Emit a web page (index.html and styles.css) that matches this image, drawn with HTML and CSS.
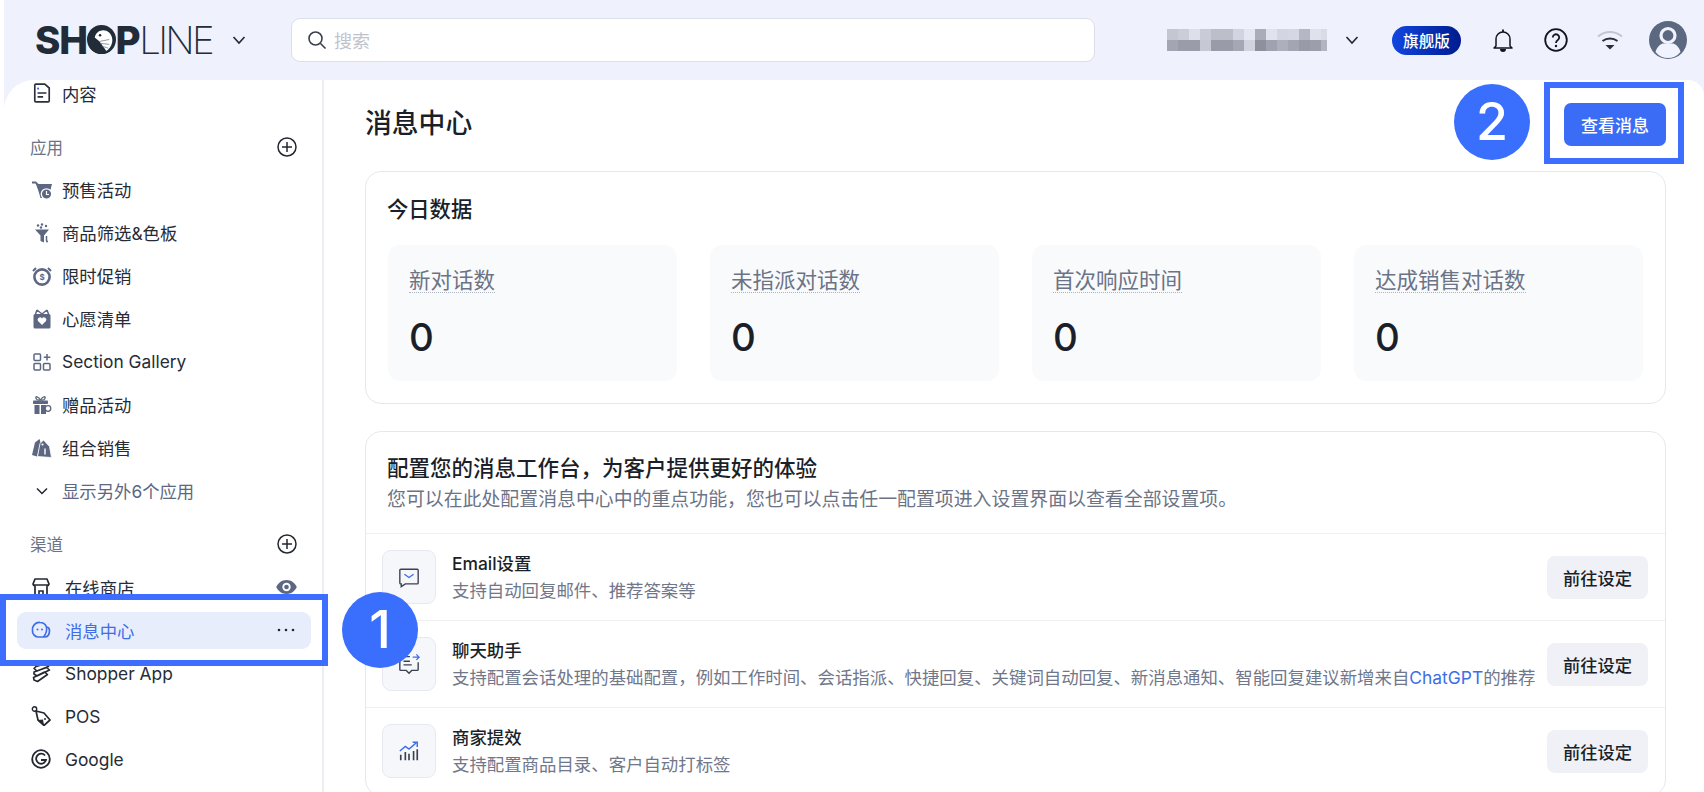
FILE: index.html
```html
<!DOCTYPE html>
<html lang="zh-CN">
<head>
<meta charset="utf-8">
<title>消息中心</title>
<link rel="stylesheet" href="styles.css">
</head>
<body>
<div class="shell">
  <header class="topbar">
    <div class="logo">
      <span class="logo-bold">SH</span><span class="logo-bold logo-o">O<svg class="logo-bird" viewBox="0 0 30 30"><circle cx="15" cy="15" r="15" fill="#222c38"/><path d="M8 13C9 7 15 4 20 6c5 2 7 8 6 12-1 4-3 7-6 9L13 17z" fill="#fff"/><circle cx="13.500" cy="10.500" r="1.300" fill="#222c38"/><path d="M13 17l10-2M14 19l9 1M16 22l6 2" stroke="#8d96a3" stroke-width="1" fill="none"/></svg></span><span class="logo-bold">P</span><span class="logo-light">LINE</span>
    </div>
    <svg class="chev logo-chev" viewBox="0 0 14 14"><path d="M1.500 4l5.500 6 5.500-6" /></svg>
    <div class="search">
      <svg class="search-icon" viewBox="0 0 20 20"><circle cx="8.500" cy="8.500" r="6.500"/><path d="M13.500 13.500L18.500 18.500"/></svg>
      <span class="search-text">搜索</span>
    </div>
    <svg class="mosaic" viewBox="0 0 160 22">
      <g>
        <rect x="0" width="11" height="11" fill="#c5c6d2"/><rect x="11" width="11" height="11" fill="#cbcdd9"/><rect x="22" width="11" height="11" fill="#dddfeb"/><rect x="33" width="11" height="11" fill="#cacbd8"/><rect x="44" width="11" height="11" fill="#bcbeca"/><rect x="55" width="11" height="11" fill="#bcbeca"/><rect x="66" width="11" height="11" fill="#d2d4e1"/><rect x="77" width="11" height="11" fill="#e4e6f2"/><rect x="88" width="11" height="11" fill="#abacb9"/><rect x="99" width="11" height="11" fill="#e0e2ee"/><rect x="110" width="11" height="11" fill="#d3d5e2"/><rect x="121" width="11" height="11" fill="#d5d7e4"/><rect x="132" width="11" height="11" fill="#b6b7c5"/><rect x="143" width="11" height="11" fill="#dfe1ed"/><rect x="154" width="6" height="11" fill="#d9dbe7"/>
      </g>
      <g>
        <rect x="0" y="11" width="11" height="11" fill="#a4a5b3"/><rect x="11" y="11" width="11" height="11" fill="#9b9caa"/><rect x="22" y="11" width="11" height="11" fill="#9b9caa"/><rect x="33" y="11" width="11" height="11" fill="#c6c8d4"/><rect x="44" y="11" width="11" height="11" fill="#9a9ba9"/><rect x="55" y="11" width="11" height="11" fill="#9a9ba9"/><rect x="66" y="11" width="11" height="11" fill="#a6a7b5"/><rect x="77" y="11" width="11" height="11" fill="#d1d3df"/><rect x="88" y="11" width="11" height="11" fill="#8f909e"/><rect x="99" y="11" width="11" height="11" fill="#a1a2b0"/><rect x="110" y="11" width="11" height="11" fill="#aeafbd"/><rect x="121" y="11" width="11" height="11" fill="#a4a5b3"/><rect x="132" y="11" width="11" height="11" fill="#989aa8"/><rect x="143" y="11" width="11" height="11" fill="#9d9eac"/><rect x="154" y="11" width="6" height="11" fill="#b3b4c2"/>
      </g>
    </svg>
    <svg class="chev store-chev" viewBox="0 0 14 14"><path d="M1.500 4l5.500 6 5.500-6" /></svg>
    <span class="plan">旗舰版</span>
    <svg class="bell" viewBox="0 0 20 23"><path d="M3 17V10a7 7 0 0 1 14 0v7l2 2H1z" fill="none" stroke="#12151c" stroke-width="1.500" stroke-linejoin="round"/><path d="M10 0.500v2.500" stroke="#12151c" stroke-width="1.800"/><path d="M7 20h6a3 3 0 0 1-6 0z" fill="#12151c"/></svg>
    <svg class="help" viewBox="0 0 24 24"><circle cx="12" cy="12" r="10.800" fill="none" stroke="#12151c" stroke-width="1.800"/><path d="M8.800 9.500a3.200 3.200 0 1 1 5 2.600c-1.200.8-1.800 1.400-1.800 2.900" fill="none" stroke="#12151c" stroke-width="1.800"/><circle cx="12" cy="18" r="1.200" fill="#12151c"/></svg>
    <svg class="wifi" viewBox="0 0 26 20"><path d="M1 6.500C8 0.500 18 0.500 25 6.500" fill="none" stroke="#c3c6d0" stroke-width="2"/><path d="M5.500 11c4.500-3.500 10.500-3.500 15 0" fill="none" stroke="#2a2e38" stroke-width="2"/><path d="M8.500 15h9L13 19.500z" fill="#2a2e38"/></svg>
    <svg class="avatar" viewBox="0 0 38 38"><circle cx="19" cy="19" r="19" fill="#5c6880"/><circle cx="19" cy="14.500" r="7" fill="none" stroke="#f0f2fd" stroke-width="3.200"/><path d="M6.500 31c1.500-6 6-8.500 8-8.500h9c2 0 6.500 2.500 8 8.500a16 16 0 0 1-25 0z" fill="#f0f2fd"/></svg>
  </header>

  <div class="panel">
    <aside class="sidebar">
      <nav class="nav-group nav-first">
        <a class="nav-item">
          <svg class="ico" viewBox="0 0 18 18"><path d="M3.500 1h8l4 3.500V16a1 1 0 0 1-1 1h-11a1 1 0 0 1-1-1V2a1 1 0 0 1 1-1z" fill="none" stroke="#2a2f3a" stroke-width="1.500"/><circle cx="5.500" cy="5" r="1" fill="#3d6ee8"/><path d="M5 9h8M5 12.500h5" stroke="#2a2f3a" stroke-width="1.400"/></svg>
          <span>内容</span>
        </a>
      </nav>
      <nav class="nav-group">
        <div class="nav-label"><span>应用</span><svg class="plus" viewBox="0 0 20 20"><circle cx="10" cy="10" r="9" /><path d="M10 5v10M5 10h10"/></svg></div>
        <a class="nav-item">
          <svg class="ico" viewBox="0 0 20 20"><path d="M0 1.500h4L6.500 4H20l-2.500 9.500H8L3.500 3.500H0z" fill="#5d6781"/><path d="M5 6l3.500 12h2l1.500-4" fill="#5d6781"/><circle cx="14.500" cy="14" r="5.200" fill="#5d6781" stroke="#fff" stroke-width="1.300"/><path d="M14.500 11v3.500H17" fill="none" stroke="#fff" stroke-width="1.200"/></svg>
          <span>预售活动</span>
        </a>
        <a class="nav-item">
          <svg class="ico" viewBox="0 0 20 20"><circle cx="6" cy="2.500" r="1.200" fill="#5d6781"/><circle cx="10" cy="1.500" r="1.200" fill="#5d6781"/><circle cx="14" cy="3" r="1.200" fill="#5d6781"/><circle cx="9" cy="4.500" r="1.200" fill="#5d6781"/><path d="M3 6.500h14l-5 6v7l-3.500-1.500v-5.500z" fill="#5d6781"/><path d="M14.500 13v5" stroke="#5d6781" stroke-width="1.500"/><circle cx="15" cy="18.500" r="1" fill="#5d6781"/></svg>
          <span>商品筛选&amp;色板</span>
        </a>
        <a class="nav-item">
          <svg class="ico" viewBox="0 0 20 20"><circle cx="10" cy="11" r="7.600" fill="none" stroke="#5d6781" stroke-width="2.600"/><path d="M1 5l3-3M19 5l-3-3" stroke="#5d6781" stroke-width="2"/><text class="ico-dollar" x="10" y="14.200" text-anchor="middle">$</text></svg>
          <span>限时促销</span>
        </a>
        <a class="nav-item">
          <svg class="ico" viewBox="0 0 20 20"><path d="M3 5h14a1.500 1.500 0 0 1 1.500 1.500V18a1.500 1.500 0 0 1-1.500 1.500H3A1.500 1.500 0 0 1 1.500 18V6.500A1.500 1.500 0 0 1 3 5z" fill="#5d6781"/><path d="M10 5L5 1M10 5l5-4M5 1L3.500 5M15 1l1.500 4" stroke="#5d6781" stroke-width="1.500" fill="none"/><path d="M10 16l-4-4a2.300 2.300 0 0 1 4-2.500 2.300 2.300 0 0 1 4 2.500z" fill="#fff"/></svg>
          <span>心愿清单</span>
        </a>
        <a class="nav-item">
          <svg class="ico" viewBox="0 0 20 20"><rect x="2" y="2" width="6.500" height="6.500" rx="1" fill="none" stroke="#5d6781" stroke-width="1.500"/><rect x="2" y="11.500" width="6.500" height="6.500" rx="1" fill="none" stroke="#5d6781" stroke-width="1.500"/><rect x="11.500" y="11.500" width="6.500" height="6.500" rx="1" fill="none" stroke="#5d6781" stroke-width="1.500"/><path d="M15 2v6.500M11.800 5.300h6.500" stroke="#5d6781" stroke-width="1.500"/></svg>
          <span>Section Gallery</span>
        </a>
        <a class="nav-item">
          <svg class="ico" viewBox="0 0 20 20"><rect x="1" y="5.500" width="15" height="3.500" rx=".8" fill="#5d6781"/><rect x="2.500" y="10" width="5" height="9" fill="#5d6781"/><rect x="9" y="10" width="5" height="9" fill="#5d6781"/><path d="M8.500 5C6 1 3 1 4 3.500S8 5 8.500 5zM8.500 5c2.500-4 5.500-4 4.500-1.500S9 5 8.500 5z" fill="none" stroke="#5d6781" stroke-width="1.300"/><circle cx="16" cy="13.500" r="2.800" fill="#fff" stroke="#5d6781" stroke-width="1.300"/></svg>
          <span>赠品活动</span>
        </a>
        <a class="nav-item">
          <svg class="ico" viewBox="0 0 20 20"><path d="M7.500 1L3 4.500 0 17l5 1.500 3.500-14z" fill="#5d6781"/><path d="M11.500 2L8 5.500 5.500 18.500l14 1-2-11z" fill="#5d6781" stroke="#fff" stroke-width=".8"/><circle cx="10.500" cy="6.500" r="1.100" fill="#fff"/><path d="M13 10.500v6" stroke="#fff" stroke-width="1.400"/></svg>
          <span>组合销售</span>
        </a>
        <a class="nav-item nav-more">
          <svg class="ico more-chev" viewBox="0 0 14 14"><path d="M2 4.500l5 5 5-5" /></svg>
          <span>显示另外6个应用</span>
        </a>
      </nav>
      <nav class="nav-group">
        <div class="nav-label"><span>渠道</span><svg class="plus" viewBox="0 0 20 20"><circle cx="10" cy="10" r="9" /><path d="M10 5v10M5 10h10"/></svg></div>
        <a class="nav-item channel">
          <svg class="ico" viewBox="0 0 20 20"><path d="M4 2h12l2 5a2.500 2.500 0 0 1-2 2v9H4V9a2.500 2.500 0 0 1-2-2z" fill="none" stroke="#23272f" stroke-width="1.700" stroke-linejoin="round"/><path d="M2.500 8h15M8 18v-4h4v4" fill="none" stroke="#23272f" stroke-width="1.600"/></svg>
          <span class="grow">在线商店</span>
          <svg class="eye" viewBox="0 0 22 15"><path d="M11 0C6 0 2 3 0 7.500 2 12 6 15 11 15s9-3 11-7.500C20 3 16 0 11 0z" fill="#5d6781"/><circle cx="11" cy="7.500" r="4.500" fill="#fff"/><circle cx="11" cy="7.500" r="2.500" fill="#5d6781"/></svg>
        </a>
        <a class="nav-item channel active">
          <svg class="ico" viewBox="0 0 20 20"><path d="M9 2.500a7 7 0 0 1 6.500 4.500 3.500 3.500 0 0 1 3 3.500c0 4-2 6.500-5 6.500H7a6 6 0 0 1-5.500-6.500A7 7 0 0 1 9 2.500z" fill="none" stroke="#3d6ee8" stroke-width="1.700"/><path d="M15.500 7c.5 3-.5 7-3 10" fill="none" stroke="#3d6ee8" stroke-width="1.500"/><circle cx="6.500" cy="9.500" r="1" fill="#3d6ee8"/><circle cx="11" cy="9.500" r="1" fill="#3d6ee8"/></svg>
          <span class="grow">消息中心</span>
          <svg class="dots" viewBox="0 0 18 4"><circle cx="2" cy="2" r="1.300"/><circle cx="9" cy="2" r="1.300"/><circle cx="16" cy="2" r="1.300"/></svg>
        </a>
        <a class="nav-item channel">
          <svg class="ico" viewBox="0 0 20 20"><path d="M5 3.500l9-2.500 3.500 2.500L6 8 3 5.500zM3 9l12.500-4.500L18.500 7 6 13l-3-2zM2.500 14.500L13.500 9l3 2.500-10 7-3.500-1.500z" fill="none" stroke="#23272f" stroke-width="1.600" stroke-linejoin="round"/></svg>
          <span>Shopper App</span>
        </a>
        <a class="nav-item channel">
          <svg class="ico" viewBox="0 0 20 20"><path d="M5 5L13 7l6 7-6 5.500L7 14z" fill="none" stroke="#23272f" stroke-width="1.700" stroke-linejoin="round"/><circle cx="3.500" cy="3" r="2.200" fill="none" stroke="#23272f" stroke-width="1.400"/><path d="M7 14l6 5.500-1-6z" fill="#23272f"/><circle cx="14" cy="13" r="1" fill="#23272f"/></svg>
          <span>POS</span>
        </a>
        <a class="nav-item channel">
          <svg class="ico" viewBox="0 0 20 20"><circle cx="10" cy="10" r="8.800" fill="none" stroke="#23272f" stroke-width="1.800"/><path d="M14 6.500a5 5 0 1 0 1 4.500H10" fill="none" stroke="#23272f" stroke-width="1.800"/></svg>
          <span>Google</span>
        </a>
      </nav>
    </aside>

    <main class="main">
      <div class="page-head">
        <h1>消息中心</h1>
        <button class="btn-primary">查看消息</button>
      </div>

      <section class="card stats">
        <h2>今日数据</h2>
        <div class="stat-grid">
          <div class="stat"><span class="stat-label">新对话数</span><div class="stat-value">0</div></div>
          <div class="stat"><span class="stat-label">未指派对话数</span><div class="stat-value">0</div></div>
          <div class="stat"><span class="stat-label">首次响应时间</span><div class="stat-value">0</div></div>
          <div class="stat"><span class="stat-label">达成销售对话数</span><div class="stat-value">0</div></div>
        </div>
      </section>

      <section class="card config">
        <div class="config-head">
          <h2 class="config-title">配置您的消息工作台，为客户提供更好的体验</h2>
          <p>您可以在此处配置消息中心中的重点功能，您也可以点击任一配置项进入设置界面以查看全部设置项。</p>
        </div>
        <div class="row">
          <div class="row-icon"><svg viewBox="0 0 24 24"><path d="M3 3.500h18a1 1 0 0 1 1 1v14a1 1 0 0 1-1 1H8l-4.500 3V19.500H3a1 1 0 0 1-1-1v-14a1 1 0 0 1 1-1z" fill="none" stroke="#3a4150" stroke-width="1.500"/><path d="M7 9l5 3.500L17 9" fill="none" stroke="#3d6ee8" stroke-width="1.500"/></svg></div>
          <div class="row-text"><div class="row-title">Email设置</div><div class="row-sub">支持自动回复邮件、推荐答案等</div></div>
          <button class="btn-soft">前往设定</button>
        </div>
        <div class="row">
          <div class="row-icon"><svg viewBox="0 0 24 24"><path d="M13 4H3a1 1 0 0 0-1 1v13a1 1 0 0 0 1 1h6l3 3 3-3h6a1 1 0 0 0 1-1V10" fill="none" stroke="#3a4150" stroke-width="1.500"/><path d="M6 9h7M6 13h9" stroke="#3a4150" stroke-width="1.500"/><path d="M16 4.500h7M20 1.500l3 3-3 3" fill="none" stroke="#3d6ee8" stroke-width="1.400"/></svg></div>
          <div class="row-text"><div class="row-title">聊天助手</div><div class="row-sub">支持配置会话处理的基础配置，例如工作时间、会话指派、快捷回复、关键词自动回复、新消息通知、智能回复建议新增来自<span class="link">ChatGPT</span>的推荐</div></div>
          <button class="btn-soft">前往设定</button>
        </div>
        <div class="row">
          <div class="row-icon"><svg viewBox="0 0 24 24"><path d="M2 12l6-5 4 3 8-7" fill="none" stroke="#3d6ee8" stroke-width="1.600"/><path d="M16 2.500h5v5" fill="none" stroke="#3d6ee8" stroke-width="1.600"/><path d="M3 16v6M8 13v9M12 15v7M17 12v10M21 10v12" stroke="#3a4150" stroke-width="1.800"/></svg></div>
          <div class="row-text"><div class="row-title">商家提效</div><div class="row-sub">支持配置商品目录、客户自动打标签</div></div>
          <button class="btn-soft">前往设定</button>
        </div>
      </section>
    </main>
  </div>
</div>

<div class="callout callout-nav"></div>
<div class="callout callout-btn"></div>
<div class="step step-one">1</div>
<div class="step step-two">2</div>
</body>
</html>
```

FILE: styles.css
```css
* { box-sizing: border-box; }
html, body { margin: 0; height: 792px; overflow: hidden; }
body {
  position: relative;
  background: #fff;
  font-family: Inter, "Noto Sans CJK SC", "Noto Sans", sans-serif;
  color: #1f2430;
}
.shell {
  margin-left: 4px;
  height: 792px;
  display: flex;
  flex-direction: column;
  background: #eff1fd;
}

/* top bar */
.topbar { height: 80px; flex: none; display: flex; align-items: center; padding-left: 31px; }
.logo { width: 178px; flex: none; display: flex; align-items: center; font-size: 38.5px; line-height: 40px; letter-spacing: -1.2px; color: #222c38; }
.logo-bold { font-weight: 800; }
.logo-light { font-weight: 200; letter-spacing: -2.8px; }
.logo-o { position: relative; }
.logo-bird { position: absolute; left: 0; top: 5px; width: 29px; height: 29px; }
.chev { flex: none; width: 14px; height: 14px; }
.chev path { fill: none; stroke: #23272f; stroke-width: 1.600; }
.logo-chev { margin-left: 19px; }
.search {
  margin-left: 45px;
  width: 804px;
  height: 44px;
  flex: none;
  display: flex;
  align-items: center;
  gap: 7px;
  padding-left: 15px;
  background: #fff;
  border: 1.500px solid #dcdfe8;
  border-radius: 9px;
}
.search-icon { width: 20px; height: 20px; }
.search-icon circle, .search-icon path { fill: none; stroke: #3a3f4b; stroke-width: 1.600; }
.search-text { font-size: 18px; color: #bfc3cd; }
.mosaic { margin-left: 72px; width: 160px; height: 22px; flex: none; }
.store-chev { margin-left: 18px; }
.plan {
  margin-left: 33px;
  width: 69px;
  height: 29px;
  flex: none;
  display: flex;
  align-items: center;
  justify-content: center;
  font-size: 15.600px;
  font-weight: 500;
  color: #fff;
  border-radius: 15px;
  background: linear-gradient(90deg, #1146e0, #001b8e);
}
.bell { margin-left: 32px; width: 20px; height: 23px; flex: none; }
.help { margin-left: 31px; width: 24px; height: 24px; flex: none; }
.wifi { margin-left: 29px; width: 26px; height: 20px; flex: none; }
.avatar { margin-left: 26px; width: 38px; height: 38px; flex: none; }

/* panel */
.panel {
  flex: 1;
  min-height: 0;
  display: flex;
  overflow: hidden;
  background: #fff;
  border-radius: 30px 16px 0 0;
}

/* sidebar */
.sidebar { width: 320px; flex: none; border-right: 2px solid #eceef4; }
.nav-first { margin-top: -8.500px; }
.nav-group + .nav-group { margin-top: 10.500px; }
.nav-label, .nav-item { height: 43px; display: flex; align-items: center; }
.nav-label { justify-content: space-between; padding: 0 25px 0 26px; font-size: 16.500px; color: #6b7386; }
.plus { width: 20px; height: 20px; }
.plus circle, .plus path { fill: none; stroke: #23272f; stroke-width: 1.500; }
.nav-item { padding: 0 25px 0 28px; gap: 10px; font-size: 17.350px; color: #262b36; }
.ico { width: 20px; height: 20px; flex: none; }
.ico-dollar { font-size: 8px; font-weight: 700; fill: #5d6781; }
.nav-more { color: #5d6781; }
.more-chev { width: 14px; height: 14px; margin: 0 3px 0 3px; }
.more-chev path { fill: none; stroke: #23272f; stroke-width: 1.500; }
.channel { padding-left: 27px; gap: 14px; }
.grow { flex: 1; }
.eye { width: 21px; height: 14px; flex: none; }
.active {
  height: 37px;
  margin: 3px 11px 3px 13px;
  padding: 0 16px 0 14px;
  border-radius: 9px;
  background: #e8edfc;
  color: #3d6ee8;
}
.dots { width: 18px; height: 4px; flex: none; fill: #23272f; }

/* main */
.main { flex: 1; min-width: 0; padding: 0 38px 0 41px; }
.page-head { height: 88px; margin-bottom: 3px; display: flex; align-items: center; justify-content: space-between; }
h1 { margin: 0 0 2px; font-size: 26.800px; font-weight: 500; line-height: 34px; color: #1b1f29; }
h2 { margin: 0; font-size: 21.300px; font-weight: 500; line-height: 30px; color: #1b1f29; }
.config-title { font-size: 21.500px; }
button { font-family: inherit; border: 0; cursor: pointer; }
.btn-primary { width: 102px; height: 43px; border-radius: 7px; background: #3a6cf6; color: #fff; font-size: 17px; font-weight: 500; }
.card { background: #fff; border: 1.500px solid #e6e8ee; border-radius: 16px; }
.stats { height: 233px; padding: 22px 22px 0 21px; }
.stat-grid { margin-top: 21px; margin-left: 1px; display: grid; grid-template-columns: repeat(4, 1fr); gap: 33px; }
.stat { height: 136px; padding: 23px 21px 0; background: #f9fafc; border-radius: 12px; }
.stat-label { display: inline-block; font-size: 21.500px; line-height: 24px; color: #6b7386; border-bottom: 1px dotted #aeb3c1; }
.stat-value { margin-top: 21px; font-size: 38.500px; font-weight: 500; line-height: 46px; color: #1b1f29; }
.config { margin-top: 27px; }
.config-head { padding: 21px 22px 20px 21px; border-bottom: 1.500px solid #eff0f4; }
.config-head p { margin: 4px 0 0; font-size: 18.900px; line-height: 26px; color: #6b7386; white-space: nowrap; }
.row { height: 87px; display: flex; align-items: center; padding: 0 17px 0 16px; border-bottom: 1px solid #eff0f4; }
.row-icon { width: 54px; height: 54px; flex: none; display: flex; align-items: center; justify-content: center; background: #f5f7fb; border: 1.500px solid #e6e9f0; border-radius: 9px; }
.row-icon svg { width: 22px; height: 22px; }
.row-text { flex: 1; min-width: 0; margin-left: 16px; }
.row-title { font-size: 17.400px; line-height: 27px; font-weight: 500; color: #1b1f29; }
.row-sub { font-size: 17.420px; line-height: 27px; color: #70778a; white-space: nowrap; }
.link { color: #3d6ee8; }
.btn-soft { width: 101px; height: 43px; flex: none; border-radius: 8px; background: #eff1f6; color: #1b1f29; font-size: 17.300px; font-weight: 500; }

/* annotations over the screenshot */
.callout { position: absolute; border: 6px solid #3d6eff; }
.callout-nav { left: 0; top: 594px; width: 328px; height: 72px; }
.callout-btn { left: 1544px; top: 82px; width: 140px; height: 82px; }
.step {
  position: absolute;
  width: 76px;
  height: 76px;
  display: flex;
  align-items: center;
  justify-content: center;
  border-radius: 50%;
  background: #3a6efc;
  color: #fff;
  font-size: 52px;
  font-weight: 500;
  line-height: 76px;
}
.step-one { left: 342px; top: 592px; }
.step-two { left: 1454px; top: 84px; }
```
